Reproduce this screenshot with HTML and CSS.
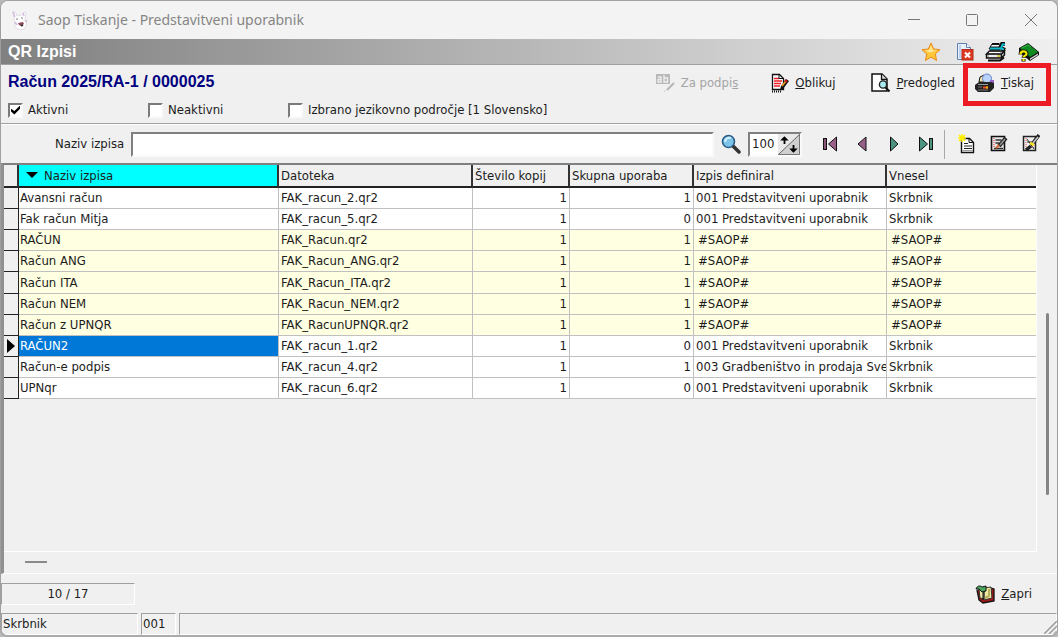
FILE: index.html
```html
<!DOCTYPE html>
<html lang="sl">
<head>
<meta charset="utf-8">
<title>Saop Tiskanje - Predstavitveni uporabnik</title>
<link rel="stylesheet" href="styles.css">
</head>
<body>
<div class="window">
  <header class="titlebar">
    <svg class="app-icon" width="18" height="20" viewBox="0 0 18 20"><path d="M2 1l3 2 1 3 5-1 2-3 2 1-1 6 2 6-3 4-5 1-4-3-1-9z" fill="#fff" stroke="#e2dbe6"/><path d="M2 2l2 5M12 3l1 3M4 12l2 3M14 10l2 2" stroke="#d3bade" stroke-width="1.500"/><path d="M5 9h2M10 8h2" stroke="#aaa" stroke-width="1.500"/><path d="M7 13l5-1 1 2-3 2-2-1z" fill="#8c4a58"/><path d="M10 16l2-1" stroke="#333" stroke-width="1.500"/></svg>
    <h1 class="title">Saop Tiskanje - Predstavitveni uporabnik</h1>
    <button class="caption" aria-label="Pomanjšaj"><svg width="12" height="12" viewBox="0 0 12 12"><path d="M0 5.500h12" stroke="#777"/></svg></button>
    <button class="caption" aria-label="Povečaj"><svg width="12" height="12" viewBox="0 0 12 12"><rect x=".5" y=".5" width="11" height="11" rx="1" fill="none" stroke="#777"/></svg></button>
    <button class="caption" aria-label="Zapri okno"><svg width="12" height="12" viewBox="0 0 12 12"><path d="M0 0l12 12M12 0L0 12" stroke="#777"/></svg></button>
  </header>

  <div class="band">
    <h2 class="band-title">QR Izpisi</h2>
    <button class="band-btn favourite" aria-label="Priljubljene"><svg width="20" height="20" viewBox="0 0 20 20"><path d="M10 1l2.700 6 6.300.7-4.700 4.300 1.300 6.500L10 15.200 4.400 18.500 5.700 12 1 7.700 7.300 7z" fill="#ffc63a" stroke="#e88a1c"/><path d="M10 3.500l1.800 4.500 4 .6-7 1.900-5-2 4.300-.5z" fill="#ffe89a"/></svg></button>
    <button class="band-btn" aria-label="Zapri dokument"><svg width="18" height="20" viewBox="0 0 18 20"><path d="M1.500 1.500h9l4 4v12h-13z" fill="#e9f1fc" stroke="#5f7fb0"/><path d="M3 3h2v13H3z" fill="#bcd0ee"/><path d="M10.500 1.500v4h4" fill="#fff" stroke="#5f7fb0"/><rect x="6" y="7.500" width="11" height="10.500" fill="#dc3a22" stroke="#b32a18"/><path d="M9 10.500l5 5M14 10.500l-5 5" stroke="#fff" stroke-width="2"/></svg></button>
    <button class="band-btn" aria-label="Tiskalnik"><svg width="22" height="20" viewBox="0 0 22 20"><path d="M4 7l3-5h9l-3 5z" fill="#fff" stroke="#111"/><path d="M7 2h7" stroke="#111" stroke-width="2"/><path d="M5 6.500h10M15 6l2-4h3M16 6l4 2" stroke="#111" stroke-width="4" fill="none"/><path d="M5 6.500h11l1.500-4h2.500M16 6.500l3 1" stroke="#10bccb" stroke-width="2" fill="none"/><path d="M1.500 12l3-3h15l-3 3zM1.500 12v4h15v-4M16.500 16l3-3V9" fill="#b9b9b9" stroke="#111" stroke-width="1.400"/><path d="M4 10.500h11" stroke="#fff" stroke-width="1.200"/><path d="M3 18.500h12l4-3" stroke="#111" stroke-width="2" fill="none"/><path d="M4 14h8" stroke="#fff" stroke-width="1.500"/><path d="M12 14h3" stroke="#d7d02a" stroke-width="1.500"/></svg></button>
    <button class="band-btn" aria-label="Pomoč"><svg width="22" height="20" viewBox="0 0 22 20"><path d="M1 6l9-5 11 9v3l-9 6L1 10z" fill="#111"/><path d="M2 6l8-4 10 8-8 5z" fill="#108a20"/><path d="M4 6l6-3 3 2" stroke="#38b449" fill="none"/><path d="M12 16.500l8-5v1.500l-8 5z" fill="#ddd"/><path d="M2.500 12.500c0-4 6-4 6-.8 0 2.300-3 2-3 4M5.500 17v2.500" fill="none" stroke="#111" stroke-width="4"/><path d="M2.500 12.500c0-4 6-4 6-.8 0 2.300-3 2-3 3.500M5.500 17v2" fill="none" stroke="#f3e600" stroke-width="2.200"/></svg></button>
  </div>

  <section class="document">
    <div class="doc-row">
      <h3 class="doc-title">Račun 2025/RA-1 / 0000025</h3>
      <nav class="actions">
        <button class="action" disabled><svg width="20" height="20" viewBox="0 0 20 20"><rect x="1" y="1" width="14" height="10" fill="#b9b9b9"/><path d="M3 4h3v5H3V6.500h3M9 2v7h3.500V5H9" fill="none" stroke="#f0f0f0" stroke-width="1.300"/><path d="M19 10l-7 7" stroke="#b5b5b5" stroke-width="2"/><path d="M9 18h1.500" stroke="#c5c5c5"/></svg><span>Za podpi<u>s</u></span></button>
        <button class="action edit"><svg width="18" height="20" viewBox="0 0 18 20"><path d="M1.500 1.500h7l4 4v11h-11z" fill="#fff" stroke="#111" stroke-width="1.300"/><path d="M3 5.500h5M3 8h8M3 10.500h7M3 13h6" stroke="#ed1c24" stroke-width="1.300"/><path d="M8 1.500v4h4.500" stroke="#111" fill="none"/><path d="M1 18.500h9" stroke="#111" stroke-dasharray="1 1" stroke-width="2"/><path d="M9 17l1-4 5-7 3 2-6 8z" fill="#111"/><path d="M11 13l4-5" stroke="#f29b25" stroke-width="1.800"/><path d="M14 7l2 2" stroke="#c11" stroke-width="2"/></svg><span><u>O</u>blikuj</span></button>
        <button class="action preview"><svg width="20" height="20" viewBox="0 0 20 20"><path d="M1 1h10l5 5v12H1z" fill="#fff" stroke="#111" stroke-width="1.500"/><path d="M10.500 1v5.500H16" fill="#ddd" stroke="#111" stroke-width="1.300"/><circle cx="12" cy="11.500" r="3.600" fill="#a8ecf2" stroke="#222" stroke-width="1.400"/><path d="M14.500 14.500l4 4" stroke="#111" stroke-width="2.200"/></svg><span><u>P</u>redogled</span></button>
        <button class="action print"><svg width="20" height="20" viewBox="0 0 20 20"><path d="M4 9l1-5 4-2v7z" fill="#f3e8a8" stroke="#111"/><circle cx="12" cy="5.500" r="4.500" fill="#b9d3ff" stroke="#6686c4"/><path d="M15 7h4v4h-4z" fill="#9463c8"/><path d="M0 12l4-3h12l3 1v5l-4 4H3l-3-3z" fill="#222"/><path d="M3 11.500h10" stroke="#999"/><path d="M3 14h4M3 17h10" stroke="#777"/><path d="M8 14.500h5" stroke="#f04a25" stroke-width="1.800"/><path d="M11 14.500h2" stroke="#ffb000" stroke-width="1.800"/></svg><span><u>T</u>iskaj</span></button>
      </nav>
    </div>
    <div class="filters">
      <label class="check"><input type="checkbox" checked>Aktivni</label>
      <label class="check"><input type="checkbox">Neaktivni</label>
      <label class="check"><input type="checkbox">Izbrano jezikovno področje [1 Slovensko]</label>
    </div>
  </section>

  <section class="toolbar">
    <label class="search-label" for="search">Naziv izpisa</label>
    <input class="search" id="search" type="text">
    <button class="tool find" aria-label="Išči"><svg width="20" height="20" viewBox="0 0 20 20"><path d="M12 12l6 6" stroke="#333" stroke-width="3.500" stroke-linecap="round"/><circle cx="7.500" cy="7.500" r="6" fill="#7cc3ea" stroke="#2c5d85" stroke-width="1.600"/><path d="M4 8c0-3 3-5 6-4" stroke="#d5f0ff" stroke-width="2" fill="none"/></svg></button>
    <div class="spin">
      <input class="spin-value" type="text" value="100" aria-label="Število zapisov">
      <button class="spin-btn" aria-label="Spremeni število"><svg width="22" height="21" viewBox="0 0 22 21"><path d="M0 0h22v21H0z" fill="#e8e8e8"/><path d="M22 0v21H0z" fill="#cfcfcf"/><path d="M1 20L21 1" stroke="#666"/><path d="M0 20.500h21.500V0" stroke="#777" fill="none"/><path d="M6.500 10V4M4.500 5.500l2-2 2 2zM15.500 11v6M13.500 15.500l2 2 2-2z" stroke="#000" stroke-width="1.800"/></svg></button>
    </div>
    <div class="nav-group">
      <button class="tool" aria-label="Prvi"><svg width="16" height="18" viewBox="0 0 16 18"><rect x="1.500" y="3.500" width="3" height="11" fill="#8c5679" stroke="#111"/><path d="M14.500 2v14L6.500 9z" fill="#9a6087" stroke="#111"/></svg></button>
      <button class="tool" aria-label="Prejšnji"><svg width="16" height="18" viewBox="0 0 16 18"><path d="M12 2v14L4 9z" fill="#9a6087" stroke="#111"/></svg></button>
      <button class="tool" aria-label="Naslednji"><svg width="16" height="18" viewBox="0 0 16 18"><path d="M4.500 2v14L12 9z" fill="#4b9480" stroke="#111"/></svg></button>
      <button class="tool" aria-label="Zadnji"><svg width="16" height="18" viewBox="0 0 16 18"><path d="M1.500 2v14L9.500 9z" fill="#4b9480" stroke="#111"/><rect x="11.500" y="3.500" width="3" height="11" fill="#4b9480" stroke="#111"/></svg></button>
    </div>
    <div class="edit-group">
      <button class="tool" aria-label="Nov"><svg width="18" height="20" viewBox="0 0 18 20"><path d="M3.500 4.500h8l4 4v10h-12z" fill="#fff" stroke="#111" stroke-width="1.400"/><path d="M11 4.500v4h4.500" fill="none" stroke="#111"/><path d="M6 9.500h4M6 12h8M6 14.500h8" stroke="#222"/><path d="M4.500 16.500h10" stroke="#999"/><path d="M4 0v8M0 4h8M1 1l6 6M7 1L1 7" stroke="#fff000" stroke-width="1.500"/></svg></button>
      <button class="tool" aria-label="Uredi"><svg width="18" height="20" viewBox="0 0 18 20"><path d="M1.500 2.500h13v14h-13z" fill="#e8e8e8" stroke="#111" stroke-width="1.600"/><path d="M4 4v10" stroke="#d33" stroke-dasharray="1 1"/><path d="M5.500 6h6M5.500 9h4M4 14.500h9" stroke="#333" stroke-width="1.300"/><path d="M16 4l-7 8" stroke="#222" stroke-width="4"/><path d="M15 5l-5 6" stroke="#999" stroke-width="1.500"/><path d="M9 11l-3 3" stroke="#d96a32" stroke-width="2"/></svg></button>
      <button class="tool" aria-label="Pregled"><svg width="18" height="20" viewBox="0 0 18 20"><path d="M1.500 2.500h12v14h-12z" fill="#eee" stroke="#222" stroke-width="1.500"/><path d="M4 4v9M9 13.500h4" stroke="#d55" stroke-dasharray="1 1"/><path d="M5 5l7 10M5 8h5" stroke="#333"/><path d="M17 1l-6 8M9 12l-5 4" stroke="#222" stroke-width="3.500"/><path d="M16 3l-5 6" stroke="#ccc" stroke-width="1.500"/><path d="M8 9l4 2" stroke="#ffe000" stroke-width="2.500"/></svg></button>
    </div>
  </section>

  <main class="grid">
    <div class="grid-body">
      <table class="list">
        <colgroup><col class="c-mark"><col class="c-name"><col class="c-file"><col class="c-count"><col class="c-shared"><col class="c-owner"><col></colgroup>
        <thead><tr><th></th><th class="sorted"><svg width="12" height="6" viewBox="0 0 12 6"><path d="M0 0h12L6 6z"/></svg>Naziv izpisa</th><th>Datoteka</th><th>Število kopij</th><th>Skupna uporaba</th><th>Izpis definiral</th><th>Vnesel</th></tr></thead>
        <tbody>
          <tr><td></td><td>Avansni račun</td><td>FAK_racun_2.qr2</td><td>1</td><td>1</td><td>001 Predstavitveni uporabnik</td><td>Skrbnik</td></tr>
          <tr><td></td><td>Fak račun Mitja</td><td>FAK_racun_5.qr2</td><td>1</td><td>0</td><td>001 Predstavitveni uporabnik</td><td>Skrbnik</td></tr>
          <tr class="saop"><td></td><td>RAČUN</td><td>FAK_Racun.qr2</td><td>1</td><td>1</td><td>#SAOP#</td><td>#SAOP#</td></tr>
          <tr class="saop"><td></td><td>Račun ANG</td><td>FAK_Racun_ANG.qr2</td><td>1</td><td>1</td><td>#SAOP#</td><td>#SAOP#</td></tr>
          <tr class="saop"><td></td><td>Račun ITA</td><td>FAK_Racun_ITA.qr2</td><td>1</td><td>1</td><td>#SAOP#</td><td>#SAOP#</td></tr>
          <tr class="saop"><td></td><td>Račun NEM</td><td>FAK_Racun_NEM.qr2</td><td>1</td><td>1</td><td>#SAOP#</td><td>#SAOP#</td></tr>
          <tr class="saop"><td></td><td>Račun z UPNQR</td><td>FAK_RacunUPNQR.qr2</td><td>1</td><td>1</td><td>#SAOP#</td><td>#SAOP#</td></tr>
          <tr class="current"><td><svg width="8" height="14" viewBox="0 0 8 14"><path d="M0 0v14l8-7z"/></svg></td><td>RAČUN2</td><td>FAK_racun_1.qr2</td><td>1</td><td>0</td><td>001 Predstavitveni uporabnik</td><td>Skrbnik</td></tr>
          <tr><td></td><td>Račun-e podpis</td><td>FAK_racun_4.qr2</td><td>1</td><td>1</td><td>003 Gradbeništvo in prodaja Sve</td><td>Skrbnik</td></tr>
          <tr><td></td><td>UPNqr</td><td>FAK_racun_6.qr2</td><td>1</td><td>0</td><td>001 Predstavitveni uporabnik</td><td>Skrbnik</td></tr>
        </tbody>
      </table>
    </div>
    <div class="vscroll"><div class="vthumb"></div></div>
    <div class="hscroll"><div class="hthumb"></div></div>
  </main>

  <section class="footer">
    <div class="counter">10 / 17</div>
    <button class="action"><svg width="20" height="20" viewBox="0 0 20 20"><path d="M2 6l2 10 4 3 11-2V5l-3-1" fill="#a01818" stroke="#111" stroke-width="1.300"/><path d="M4 5l5-2v12l-4-1zM9 4l7-1 1 11-8 2z" fill="#efe9a2" stroke="#333"/><path d="M14 5v7l-4 2" stroke="#b8ae60" stroke-width="2" fill="none"/><path d="M1 5c1-3 4-4 6-2l4-1v5l-4 1-3-3z" fill="#4aa45c" stroke="#111"/><path d="M8 8v8" stroke="#111"/></svg><span><u>Z</u>apri</span></button>
  </section>

  <footer class="status">
    <div class="cell user">Skrbnik</div>
    <div class="cell code">001</div>
    <div class="cell rest"></div>
    <svg class="grip" width="13" height="13" viewBox="0 0 13 13"><path d="M0 13L13 0M5 13l8-8M10 13l3-3" stroke="#999" stroke-width="1.500"/></svg>
  </footer>
</div>
</body>
</html>
```
FILE: styles.css
```css
* { box-sizing: border-box; }
body {
  margin: 0;
  background: #b9b9b9;
  color: #1c1c1c;
  font: 13px/16px "DejaVu Sans Condensed", Tahoma, sans-serif;
}
button, input { font: inherit; color: inherit; }
button { border: 0; padding: 0; background: none; }
h1, h2, h3 { margin: 0; }
svg { flex: none; display: block; }

.window {
  min-height: 100vh;
  display: flex;
  flex-direction: column;
  background: #f0f0f0;
  border: 1px solid #a0a0a0;
  border-bottom: 2px solid #aaa;
  border-radius: 8px;
  overflow: hidden;
}

.titlebar {
  height: 38px;
  display: flex;
  align-items: center;
  padding-left: 10px;
  background: #f3f3f3;
}
.title {
  flex: 1;
  margin-left: 9px;
  font: 14px/20px "Noto Sans", sans-serif;
  color: #858585;
}
.caption {
  width: 58px;
  height: 38px;
  display: grid;
  place-items: center;
}
.caption:last-child { width: 56px; padding-left: 4px; }

.band {
  height: 26px;
  display: flex;
  align-items: center;
  gap: 11px;
  padding: 0 17px 0 7px;
  background: linear-gradient(90deg, #808080, #f0f0f0);
  border-bottom: 1px solid #a0a0a0;
}
.band-title {
  flex: 1;
  font: bold 16px/20px "Liberation Sans", Arial, sans-serif;
  color: #fff;
}
.favourite { margin-right: 4px; }

.document {
  padding: 2px 0 0 7px;
  height: 59px;
  border-bottom: 1px solid #a0a0a0;
}
.doc-row { display: flex; align-items: center; height: 30px; }
.doc-title {
  flex: 1;
  font: bold 16px/20px "Liberation Sans", Arial, sans-serif;
  color: #000080;
}
.actions { display: flex; padding: 2px 23px 0 0; }
.action {
  position: relative;
  display: flex;
  align-items: center;
  gap: 6px;
  white-space: nowrap;
}
.action:disabled { color: #a5a5a5; }
.edit { margin-left: 33px; }
.preview { margin-left: 35px; }
.print { margin-left: 20px; }
.print::after {
  content: "";
  position: absolute;
  inset: -10px -17px -13px -12px;
  border: 5px solid #ed1c24;
}

.filters { display: flex; align-items: center; height: 26px; }
.check { display: flex; align-items: center; gap: 5px; width: 140px; white-space: nowrap; }
.check input {
  flex: none;
  appearance: none;
  width: 15px;
  height: 15px;
  margin: 0;
  background: #fff;
  border: 2px solid;
  border-color: #7a7a7a #fafafa #fafafa #7a7a7a;
  display: grid;
  place-items: center;
}
.check input:checked::before {
  content: "";
  width: 9px;
  height: 9px;
  background: #000;
  clip-path: polygon(0 35%, 38% 62%, 100% 0, 100% 35%, 38% 100%, 0 68%);
}

.toolbar {
  height: 39px;
  display: flex;
  align-items: center;
  padding-right: 17px;
  border-top: 1px solid #fff;
}
.search-label { padding-left: 54px; width: 130px; white-space: nowrap; }
.search {
  flex: 1;
  min-width: 0;
  height: 25px;
  background: #fff;
  border: 2px solid;
  border-color: #808080 #fafafa #fafafa #808080;
}
.find { margin: 0 7px; }
.spin {
  display: flex;
  width: 54px;
  height: 25px;
  background: #fff;
  border: 2px solid;
  border-color: #808080 #fafafa #fafafa #808080;
}
.spin-value { flex: 1; min-width: 0; border: 0; padding: 0 0 0 2px; background: none; }
.nav-group { display: flex; gap: 16px; margin-left: 20px; }
.edit-group {
  display: flex;
  align-items: center;
  gap: 14px;
  height: 29px;
  margin-left: 10px;
  padding-left: 13px;
  border-left: 1px solid #a8a8a8;
}

.grid {
  flex: 1;
  display: grid;
  grid-template-columns: 1fr 20px;
  grid-template-rows: 1fr 21px;
  border-top: 2px solid #808080;
  border-left: 3px solid #909090;
  border-bottom: 1px solid #fff;
}
.grid-body {
  border-right: 1px solid #fff;
  border-bottom: 1px solid #fff;
  overflow: hidden;
}
.list { width: 100%; table-layout: fixed; border-collapse: separate; border-spacing: 0; }
.c-mark { width: 15px; }
.c-name { width: 260px; }
.c-file { width: 194px; }
.c-count { width: 97px; }
.c-shared { width: 124px; }
.c-owner { width: 193px; }
th {
  height: 23px;
  padding: 0 0 0 2px;
  font-weight: normal;
  text-align: left;
  white-space: nowrap;
  border-right: 2px solid #333;
  border-bottom: 2px solid #222;
}
th:last-child { border-right: 0; }
.sorted { background: #00ffff; padding-left: 7px; }
.sorted svg { display: inline-block; margin-right: 6px; vertical-align: 2px; }
td {
  height: 21px;
  padding: 0 2px;
  background: #fff;
  border-right: 1px solid #c0c0c0;
  border-bottom: 1px solid #c0c0c0;
  white-space: nowrap;
  overflow: hidden;
}
tr:nth-child(5) td { height: 22px; }
td:last-child { border-right: 0; }
td:first-child { background: #f0f0f0; border-color: #222; padding: 0 0 0 3px; }
td:nth-child(2) { padding-left: 1px; }
td:nth-child(4), td:nth-child(5) { text-align: right; }
.saop td { background: #ffffe1; }
.saop td:first-child { background: #f0f0f0; }
.saop td:nth-child(n+6) { padding-left: 4px; }
.current td:nth-child(2) { background: #0078d7; color: #fff; }

.vscroll { padding: 148px 0 0 9px; }
.vthumb { width: 3px; height: 182px; border-radius: 2px; background: #858585; }
.hscroll { grid-column: 1 / -1; padding: 9px 0 0 21px; }
.hthumb { width: 22px; height: 2px; background: #8a8a8a; }

.footer {
  height: 39px;
  display: flex;
  align-items: center;
  justify-content: space-between;
  padding-right: 25px;
}
.counter {
  width: 134px;
  height: 22px;
  line-height: 20px;
  text-align: center;
  border: 1px solid;
  border-color: #a0a0a0 #fff #fff #a0a0a0;
}
.status {
  position: relative;
  display: flex;
  gap: 3px;
  height: 22px;
}
.cell {
  padding-left: 1px;
  line-height: 20px;
  border: 1px solid;
  border-color: #a0a0a0 #fff #fff #a0a0a0;
}
.user { width: 137px; }
.code { width: 35px; }
.rest { flex: 1; }
.grip { position: absolute; right: 0; bottom: 1px; }
```
